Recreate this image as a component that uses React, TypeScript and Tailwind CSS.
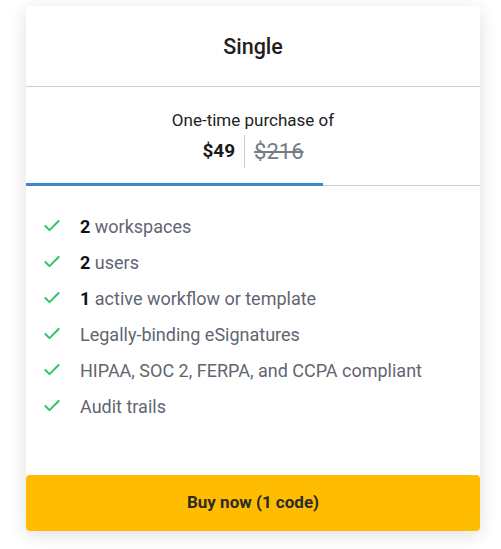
import { Check } from "lucide-react";

const features: { bold?: string; text: string }[] = [
  { bold: "2", text: "workspaces" },
  { bold: "2", text: "users" },
  { bold: "1", text: "active workflow or template" },
  { text: "Legally-binding eSignatures" },
  { text: "HIPAA, SOC 2, FERPA, and CCPA compliant" },
  { text: "Audit trails" },
];

export default function App() {
  return (
    <div className="min-h-screen bg-white pt-[6px] font-['Roboto',sans-serif]">
      <div className="ml-[26px] flex w-[454px] flex-col rounded-[4px] bg-white shadow-[0_4px_18px_rgba(0,0,0,0.13)]">
        <div className="flex h-[81px] items-center justify-center border-b border-[#c9ced8] pt-[2px]">
          <h2 className="text-[21.5px] font-medium text-[#1f1f1f]">Single</h2>
        </div>

        <div className="relative flex h-[99px] flex-col items-center border-b border-[#c9ced8] pt-[22px]">
          <p className="text-[17px] leading-[22px] text-[#222]">One-time purchase of</p>
          <div className="mt-[4px] flex items-center">
            <span className="pr-[9px] text-[19px] font-bold text-[#1a1a1a]">$49</span>
            <span className="h-[33px] w-px bg-[#c9ced8]" />
            <span className="pl-[9px] text-[22px] text-[#777c84] line-through">$216</span>
          </div>
          <div className="absolute bottom-[-1px] left-0 h-[3px] w-[297px] bg-[#3d87c9]" />
        </div>

        <ul className="flex flex-col pt-[22px] pb-[51px]">
          {features.map((f) => (
            <li key={f.text} className="flex h-[36px] items-center pl-[16px]">
              <Check className="h-[20px] w-[20px] text-[#22c55e]" strokeWidth={2.2} />
              <span className="ml-[18px] text-[18px] text-[#5f6670]">
                {f.bold && <span className="font-bold text-[#111]">{f.bold} </span>}
                {f.text}
              </span>
            </li>
          ))}
        </ul>

        <button
          type="button"
          className="flex h-[56px] items-center justify-center rounded-[4px] bg-[#ffbc00] text-[17px] font-bold text-[#2b2b2b]"
        >
          Buy now (1 code)
        </button>
      </div>
    </div>
  );
}
